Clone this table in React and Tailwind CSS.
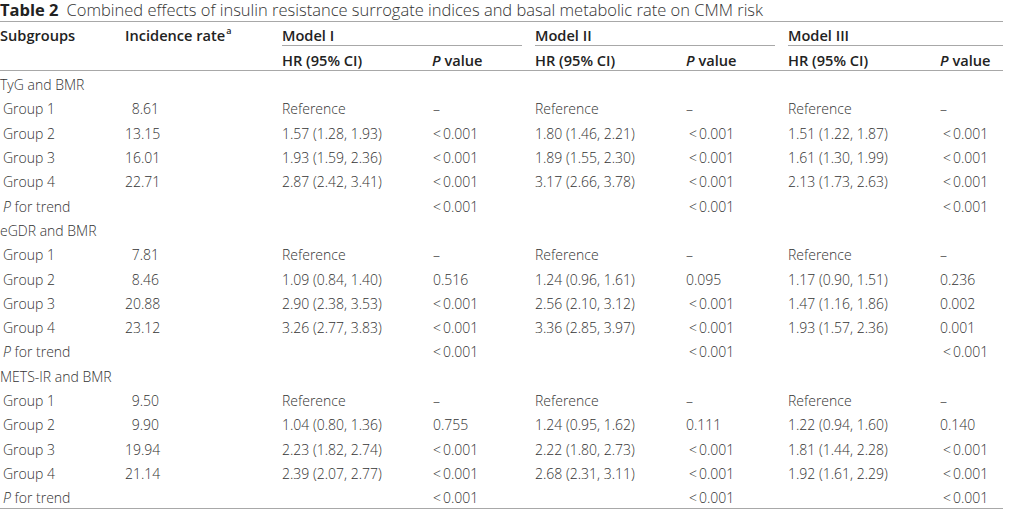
import React from "react";

const cols = "grid grid-cols-[125px_157px_150px_103px_151px_102px_152px_63px]";

const sections = [
  {
    title: "TyG and BMR",
    rows: [
      ["Group 1", "8.61", "Reference", "–", "Reference", "–", "Reference", "–"],
      ["Group 2", "13.15", "1.57 (1.28, 1.93)", "< 0.001", "1.80 (1.46, 2.21)", "< 0.001", "1.51 (1.22, 1.87)", "< 0.001"],
      ["Group 3", "16.01", "1.93 (1.59, 2.36)", "< 0.001", "1.89 (1.55, 2.30)", "< 0.001", "1.61 (1.30, 1.99)", "< 0.001"],
      ["Group 4", "22.71", "2.87 (2.42, 3.41)", "< 0.001", "3.17 (2.66, 3.78)", "< 0.001", "2.13 (1.73, 2.63)", "< 0.001"],
      ["P", "", "", "< 0.001", "", "< 0.001", "", "< 0.001"],
    ],
  },
  {
    title: "eGDR and BMR",
    rows: [
      ["Group 1", "7.81", "Reference", "–", "Reference", "–", "Reference", "–"],
      ["Group 2", "8.46", "1.09 (0.84, 1.40)", "0.516", "1.24 (0.96, 1.61)", "0.095", "1.17 (0.90, 1.51)", "0.236"],
      ["Group 3", "20.88", "2.90 (2.38, 3.53)", "< 0.001", "2.56 (2.10, 3.12)", "< 0.001", "1.47 (1.16, 1.86)", "0.002"],
      ["Group 4", "23.12", "3.26 (2.77, 3.83)", "< 0.001", "3.36 (2.85, 3.97)", "< 0.001", "1.93 (1.57, 2.36)", "0.001"],
      ["P", "", "", "< 0.001", "", "< 0.001", "", "< 0.001"],
    ],
  },
  {
    title: "METS-IR and BMR",
    rows: [
      ["Group 1", "9.50", "Reference", "–", "Reference", "–", "Reference", "–"],
      ["Group 2", "9.90", "1.04 (0.80, 1.36)", "0.755", "1.24 (0.95, 1.62)", "0.111", "1.22 (0.94, 1.60)", "0.140"],
      ["Group 3", "19.94", "2.23 (1.82, 2.74)", "< 0.001", "2.22 (1.80, 2.73)", "< 0.001", "1.81 (1.44, 2.28)", "< 0.001"],
      ["Group 4", "21.14", "2.39 (2.07, 2.77)", "< 0.001", "2.68 (2.31, 3.11)", "< 0.001", "1.92 (1.61, 2.29)", "< 0.001"],
      ["P", "", "", "< 0.001", "", "< 0.001", "", "< 0.001"],
    ],
  },
];

function PVal({ v, shift }) {
  if (v.startsWith("<")) {
    return (
      <span className={shift ? "pl-[3px]" : ""}>
        {"<"}
        <span className="ml-[2px]">{v.slice(2)}</span>
      </span>
    );
  }
  return <span>{v}</span>;
}

function Row({ r }) {
  const isTrend = r[0] === "P";
  return (
    <div className={`${cols} h-[24.3px] items-center pt-[4px]`}>
      <div className="pl-[3px]">
        {isTrend ? (
          <span>
            <i>P</i> for trend
          </span>
        ) : (
          r[0]
        )}
      </div>
      <div className="w-[34px] text-right">{r[1]}</div>
      <div>{r[2]}</div>
      <div className="pl-[1px]">
        <PVal v={r[3]} />
      </div>
      <div>{r[4]}</div>
      <div>
        <PVal v={r[5]} shift />
      </div>
      <div>{r[6]}</div>
      <div>
        <PVal v={r[7]} shift />
      </div>
    </div>
  );
}

export default function App() {
  return (
    <div
      className="w-[1012px] h-[514px] bg-white text-[#333] text-[14px] leading-none overflow-hidden"
      style={{ fontFamily: '"Open Sans", "Noto Sans", sans-serif', fontWeight: 300 }}
    >
      <div className="w-[1003px]">
        <div className="h-[22px] border-b border-[#a8a8a8] flex items-end pb-[1px] text-[16.5px] leading-[20px] text-[#333]">
          <span className="font-bold text-[#222] mr-[8px]">Table 2</span>
          <span>Combined effects of insulin resistance surrogate indices and basal metabolic rate on CMM risk</span>
        </div>
        <div className="grid grid-cols-[125px_157px_253px_253px_215px] font-semibold text-[#222] text-[14.6px]">
          <div className="h-[24px] flex items-center pt-[3px]">Subgroups</div>
          <div className="h-[24px] flex items-center pt-[3px]">
            Incidence rate<sup className="text-[9px] -top-[5px] ml-[1px]">a</sup>
          </div>
          <div className="h-[24px] flex items-center pt-[3px] border-b border-[#a8a8a8] mr-[13px]">Model I</div>
          <div className="h-[24px] flex items-center pt-[3px] border-b border-[#a8a8a8] mr-[13px]">Model II</div>
          <div className="h-[24px] flex items-center pt-[3px] border-b border-[#a8a8a8]">Model III</div>
        </div>
        <div className={`${cols} h-[25px] items-center pt-[4px] border-b border-[#a8a8a8] font-semibold text-[#222] text-[14.6px]`}>
          <div></div>
          <div></div>
          <div>HR (95% CI)</div>
          <div>
            <i>P</i> value
          </div>
          <div>HR (95% CI)</div>
          <div>
            <i>P</i> value
          </div>
          <div>HR (95% CI)</div>
          <div>
            <i>P</i> value
          </div>
        </div>
        <div className="border-b border-[#a8a8a8]">
          {sections.map((s) => (
            <div key={s.title}>
              <div className="h-[24.3px] flex items-center pt-[4px]">{s.title}</div>
              {s.rows.map((r, i) => (
                <Row key={i} r={r} />
              ))}
            </div>
          ))}
        </div>
      </div>
    </div>
  );
}
